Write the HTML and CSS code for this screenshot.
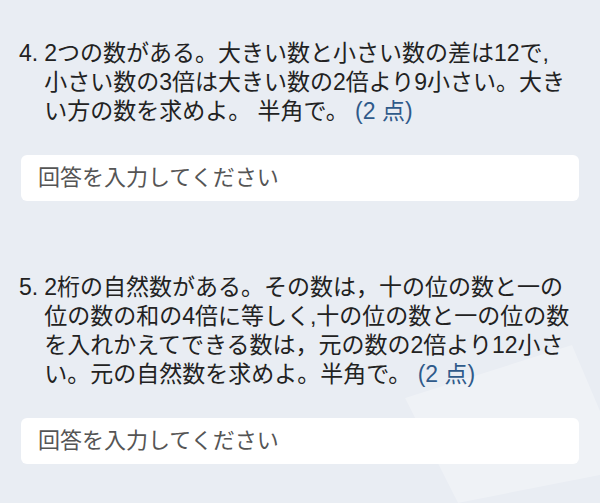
FILE: index.html
```html
<!DOCTYPE html>
<html lang="ja">
<head>
  <meta charset="UTF-8" />
  <meta name="viewport" content="width=device-width, initial-scale=1.0"/>
  <title>小テスト</title>
  <link rel="stylesheet" href="styles.css">
</head>
<body>
  <!-- faint card in the back, just decoration -->
  <svg class="backdrop" viewBox="0 0 600 503" width="600" height="503">
    <polygon points="405,398 572,345 625,470 458,503" fill="#ffffff" fill-opacity="0.28"/>
  </svg>

  <div class="quiz">
    <div class="question">
      <div class="q-head">
        <span class="q-num">4.</span>
        <p class="q-text">2つの数がある。大きい数と小さい数の差は12で,<br>小さい数の3倍は大きい数の2倍より9小さい。大き<br>い方の数を求めよ。 半角で。 <span class="points">(2 点)</span></p>
      </div>
      <input class="answer" type="text" placeholder="回答を入力してください">
    </div>

    <div class="question">
      <div class="q-head">
        <span class="q-num">5.</span>
        <p class="q-text">2桁の自然数がある。その数は，十の位の数と一の<br>位の数の和の4倍に等しく,十の位の数と一の位の数<br>を入れかえてできる数は，元の数の2倍より12小さ<br>い。元の自然数を求めよ。半角で。 <span class="points">(2 点)</span></p>
      </div>
      <input class="answer" type="text" placeholder="回答を入力してください">
    </div>
  </div>
</body>
</html>
```

FILE: styles.css
```css
html, body {
  margin: 0;
  padding: 0;
  height: 100%;
  overflow: hidden;
}

body {
  position: relative;
  background: #e9edf3;
  font-family: "Liberation Sans", "Noto Sans CJK JP", sans-serif;
  color: #222;
}

.backdrop {
  position: absolute;
  top: 0;
  left: 0;
  z-index: 0;
}

.quiz {
  position: relative;
  z-index: 1;
  display: flex;
  flex-direction: column;
  gap: 72px;
  padding: 39px 21px 0 19px;
}

.question {
  display: flex;
  flex-direction: column;
  gap: 29px;
}

.q-head {
  display: flex;
  gap: 6px;
}

.q-num,
.q-text {
  font-size: 23px;
  line-height: 29px;
}

.q-text {
  margin: 0;
  white-space: nowrap;
}

.points {
  color: #2f5a8a;
}

.answer {
  box-sizing: border-box;
  width: calc(100% - 2px);
  height: 46px;
  margin-left: 2px;
  padding: 0 17px;
  border: none;
  border-radius: 6px;
  background: #fff;
  font-family: "Liberation Sans", "Noto Sans CJK JP", sans-serif;
  font-size: 22px;
  outline: none;
}

.answer::placeholder {
  color: #555;
}
```
